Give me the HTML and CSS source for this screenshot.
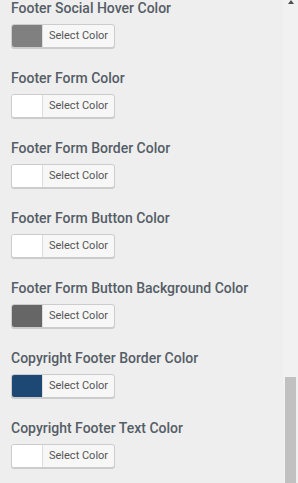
FILE: index.html
```html
<!DOCTYPE html>
<html lang="en">
<head>
    <meta charset="UTF-8">
    <meta name="viewport" content="width=device-width, initial-scale=1.0">
    <title>footer colors</title>
    <link rel="stylesheet" href="styles.css">
</head>
<body>
    <div class="panel">
      <ul class="controls">
        <li class="control">
          <span class="title">Footer Social Hover Color</span>
          <button class="picker"><span class="swatch" style="background:#808080"></span><span class="label">Select Color</span></button>
        </li>
        <li class="control">
          <span class="title">Footer Form Color</span>
          <button class="picker"><span class="swatch" style="background:#ffffff"></span><span class="label">Select Color</span></button>
        </li>
        <li class="control">
          <span class="title">Footer Form Border Color</span>
          <button class="picker"><span class="swatch" style="background:#ffffff"></span><span class="label">Select Color</span></button>
        </li>
        <li class="control">
          <span class="title">Footer Form Button Color</span>
          <button class="picker"><span class="swatch" style="background:#ffffff"></span><span class="label">Select Color</span></button>
        </li>
        <li class="control">
          <span class="title">Footer Form Button Background Color</span>
          <button class="picker"><span class="swatch" style="background:#666666"></span><span class="label">Select Color</span></button>
        </li>
        <li class="control">
          <span class="title">Copyright Footer Border Color</span>
          <button class="picker"><span class="swatch" style="background:#1d4873"></span><span class="label">Select Color</span></button>
        </li>
        <li class="control">
          <span class="title">Copyright Footer Text Color</span>
          <button class="picker"><span class="swatch" style="background:#ffffff"></span><span class="label">Select Color</span></button>
        </li>
      </ul>
      <div class="scrollbar">
        <div class="arrow"></div>
        <div class="thumb"></div>
      </div>
    </div>
</body>
</html>
```

FILE: styles.css
```css
html, body {
  margin: 0;
  height: 100%;
}

body {
  background-color: #eeeeee;
  font-family: Roboto, "Noto Sans", sans-serif;
  overflow: hidden;
}

.panel {
  display: flex;
  height: 483px;
}

.controls {
  flex: 1;
  list-style: none;
  margin: -2px 0 0 0;
  padding: 0 0 0 11px;
}

.control {
  display: flex;
  flex-direction: column;
  align-items: flex-start;
  margin-bottom: 20px;
}

.title {
  font-size: 14px;
  line-height: 20px;
  font-weight: 500;
  color: #555d66;
  margin-bottom: 6px;
}

.picker {
  display: flex;
  align-items: stretch;
  height: 24px;
  padding: 0;
  border: 1px solid #cccccc;
  border-radius: 3px;
  background-color: #f7f7f7;
  box-shadow: 0 1px 0 #cccccc;
  cursor: pointer;
  overflow: hidden;
  font-family: Roboto, "Noto Sans", sans-serif;
}

.swatch {
  width: 30px;
  border-right: 1px solid #dddddd;
}

.label {
  padding: 0 6px 0 6px;
  font-size: 11px;
  line-height: 22px;
  color: #555555;
}

.scrollbar {
  width: 15px;
  display: flex;
  flex-direction: column;
  align-items: center;
  background-color: #f1f1f1;
}

.arrow {
  width: 0;
  height: 0;
  border-left: 3.5px solid transparent;
  border-right: 3.5px solid transparent;
  border-bottom: 4px solid #505050;
}

.thumb {
  margin-top: auto;
  width: 11px;
  height: 106px;
  background-color: #c1c1c1;
}
```
